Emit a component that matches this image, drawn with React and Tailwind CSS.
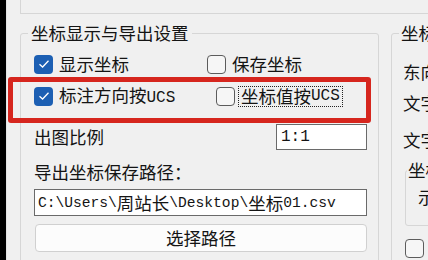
import React from "react";

const CJK = /([\u3000-\u303f\uff00-\uffef\u4e00-\u9fff]+)/;

function T({ text, big }) {
  const parts = text.split(CJK).filter((p) => p.length > 0);
  return (
    <>
      {parts.map((p, i) =>
        CJK.test(p) ? (
          <span key={i} className="text-[17.5px] [font-family:'Noto_Sans_CJK_SC',sans-serif]">
            {p}
          </span>
        ) : big ? (
          <span key={i} className="text-[16px] [font-family:'Liberation_Mono',monospace]">
            {p}
          </span>
        ) : (
          <span key={i} className="text-[14.6px] [font-family:'Liberation_Mono',monospace]">
            {p}
          </span>
        )
      )}
    </>
  );
}

function Checked() {
  return (
    <div className="w-[19px] h-[19px] rounded-[4px] bg-[#1c5fb3] flex items-center justify-center shrink-0">
      <svg width="12" height="10" viewBox="0 0 12 10">
        <polyline points="1.5,5.2 4.6,8 10.5,1.8" fill="none" stroke="#ffffff" strokeWidth="1.3" />
      </svg>
    </div>
  );
}

function Unchecked() {
  return <div className="w-[19px] h-[19px] rounded-[4px] border border-[#5c5c5c] bg-[#f6f6f6] shrink-0" />;
}

export default function App() {
  return (
    <div className="w-[428px] h-[260px] overflow-hidden flex bg-black relative text-[#141414] leading-[24px]">
      <div className="w-[6px] bg-black shrink-0" />
      <div className="flex-1 bg-[#f0f0f0] border-l border-[#e4e4e4] flex flex-col">
        <div className="ml-[13px] h-[14px] border-l border-b border-[#d6d6d6] shrink-0" />
        <div className="flex ml-[13px] gap-[12px] mt-[19px] shrink-0">
          {/* left group */}
          <div className="w-[359px] h-[240px] shrink-0 border border-[#d6d6d6] rounded-[3px] pl-[13px] pr-[11px] flex flex-col">
            <div className="-mt-[13px] -ml-[6px] px-[3px] w-fit bg-[#f0f0f0] h-[24px] whitespace-nowrap">
              <T text="坐标显示与导出设置" />
            </div>
            <div className="mt-[3px] h-[32px] flex items-center">
              <div className="w-[173px] flex items-center gap-[6px]">
                <Checked />
                <span className="whitespace-nowrap"><T text="显示坐标" /></span>
              </div>
              <div className="flex items-center gap-[6px]">
                <Unchecked />
                <span className="whitespace-nowrap"><T text="保存坐标" /></span>
              </div>
            </div>
            <div className="h-[32px] flex items-center">
              <div className="w-[182px] flex items-center gap-[6px]">
                <Checked />
                <span className="whitespace-nowrap"><T text="标注方向按UCS" big /></span>
              </div>
              <div className="flex items-center gap-[3px]">
                <Unchecked />
                <span className="whitespace-nowrap border border-dotted border-[#222] px-[2px] h-[21px] flex items-center">
                  <T text="坐标值按UCS" big />
                </span>
              </div>
            </div>
            <div className="mt-[12px] h-[26px] flex items-center">
              <span className="whitespace-nowrap"><T text="出图比例" /></span>
              <div className="ml-auto w-[91px] h-[26px] bg-white border border-[#6a6a6a] pl-[4px] flex items-center">
                <T text="1:1" big />
              </div>
            </div>
            <div className="mt-[10px] h-[24px] whitespace-nowrap">
              <T text="导出坐标保存路径：" />
            </div>
            <div className="mt-[5px] h-[27px] bg-white border border-[#6a6a6a] pl-[3px] flex items-center whitespace-nowrap overflow-hidden">
              <T text={"C:\\Users\\周站长\\Desktop\\坐标01.csv"} />
            </div>
            <div className="mt-[8px] h-[28px] ml-[1px] bg-[#fcfcfc] border border-[#d0d0d0] rounded-[4px] flex items-center justify-center">
              <T text="选择路径" />
            </div>
          </div>
          {/* right group */}
          <div className="w-[90px] h-[240px] shrink-0 border border-[#d6d6d6] rounded-[3px] pl-[11px] flex flex-col">
            <div className="-mt-[13px] -ml-[4px] px-[2px] w-fit bg-[#f0f0f0] h-[24px] whitespace-nowrap">
              <T text="坐标样式" />
            </div>
            <div className="mt-[15px] h-[24px] whitespace-nowrap"><T text="东向偏移" /></div>
            <div className="mt-[7px] h-[24px] whitespace-nowrap"><T text="文字高度" /></div>
            <div className="mt-[13px] h-[24px] whitespace-nowrap"><T text="文字样式" /></div>
            <div className="mt-[18px] ml-[2px] h-[56px] border border-[#d6d6d6] rounded-[3px] flex flex-col">
              <div className="-mt-[13px] ml-[1px] px-[1px] w-fit bg-[#f0f0f0] h-[24px] whitespace-nowrap">
                <T text="坐标" />
              </div>
              <div className="mt-[3px] ml-[12px] h-[24px] whitespace-nowrap"><T text="示例" /></div>
            </div>
            <div className="mt-[10px] ml-[2px] flex items-center gap-[6px]">
              <Unchecked />
              <span className="whitespace-nowrap"><T text="显示" /></span>
            </div>
          </div>
        </div>
      </div>
      {/* red annotation box */}
      <div className="absolute left-[8px] top-[77px] w-[363px] h-[46px] border-[5px] border-[#d6261e] rounded-[3px] pointer-events-none" />
    </div>
  );
}
